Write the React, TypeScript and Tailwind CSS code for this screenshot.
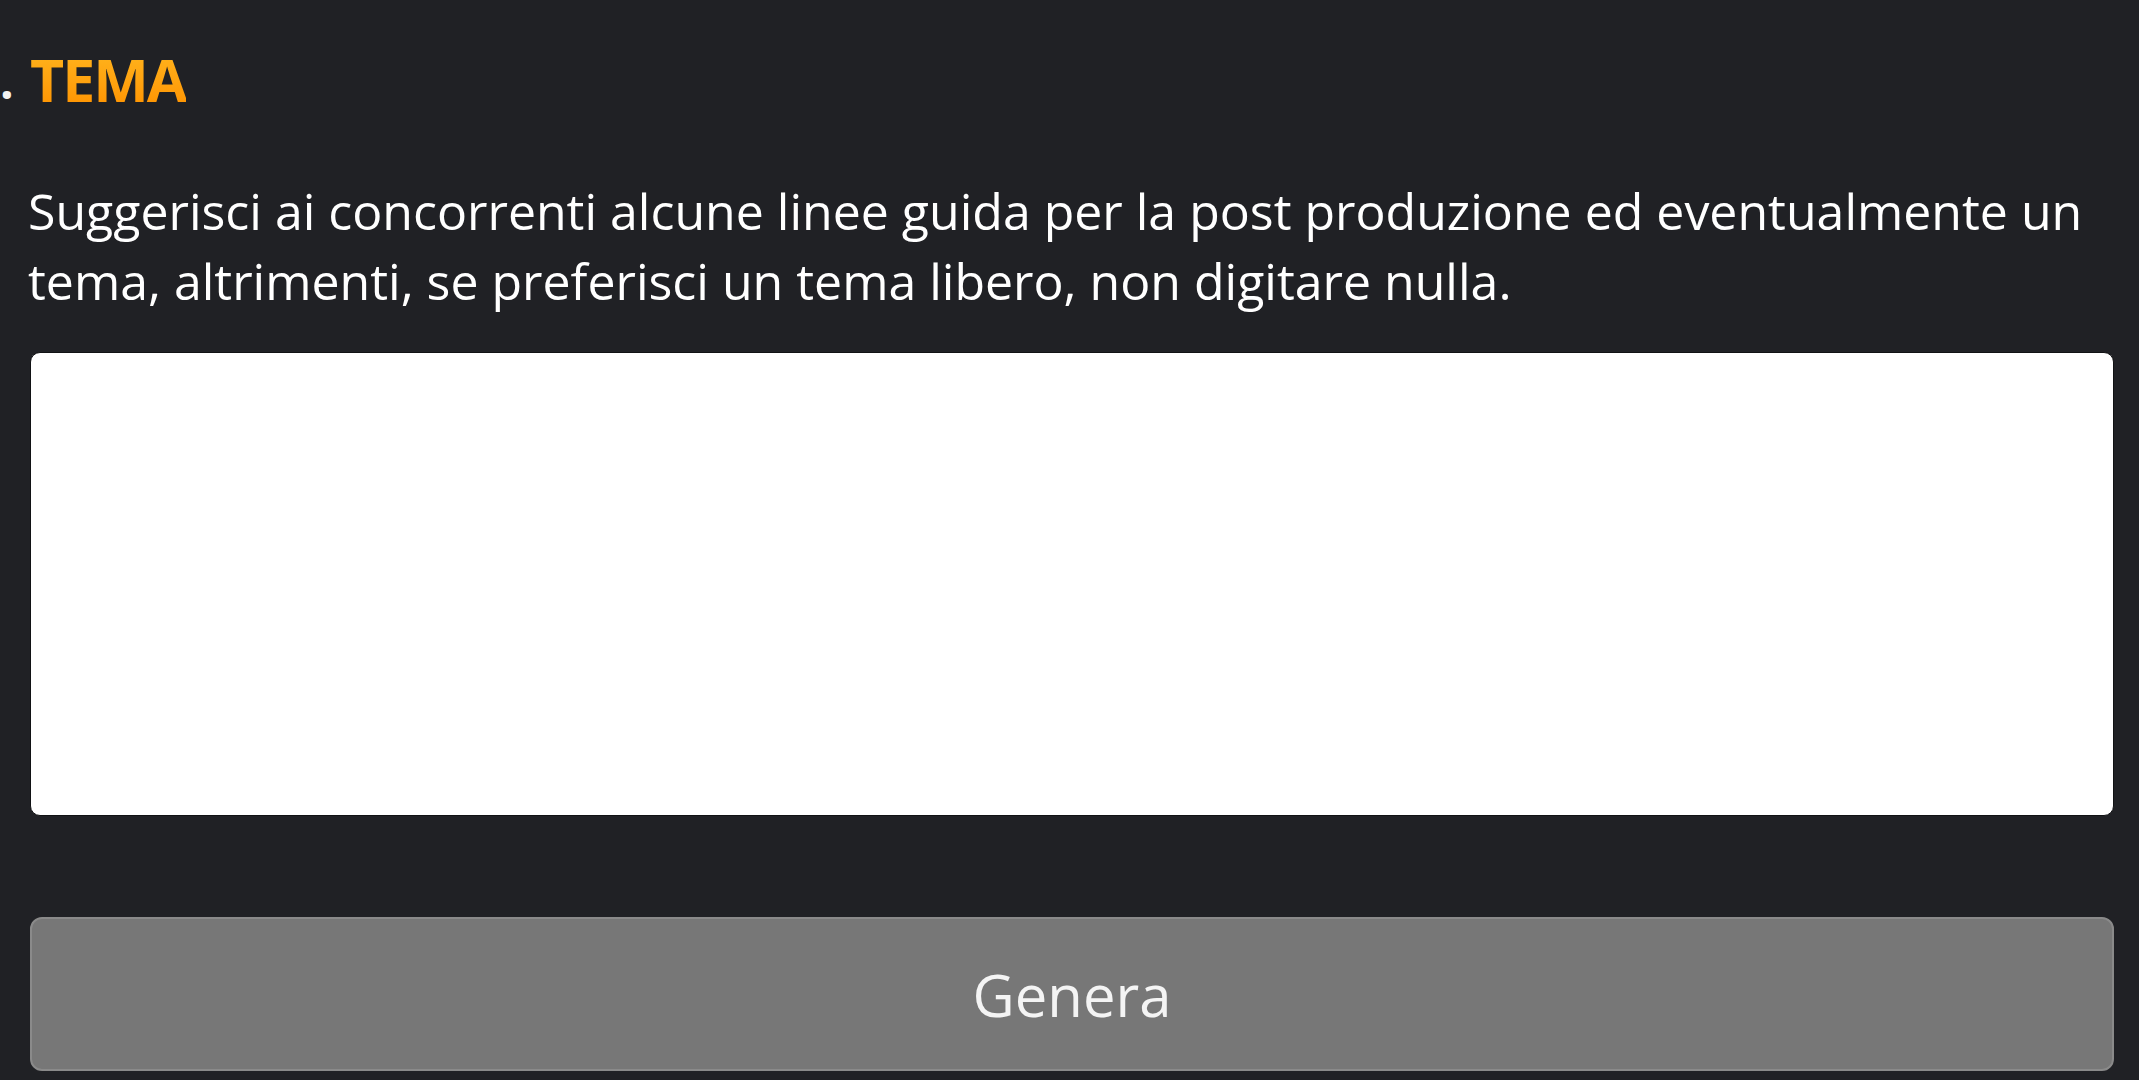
import { useState } from 'react';

const App = () => {
  const [tema, setTema] = useState('');

  return (
    <div className="w-screen h-screen overflow-hidden bg-[#202125] font-['Open_Sans',sans-serif]">
      <div className="relative pl-[30px] pr-[25px] pt-[50px]">
        <span className="absolute left-[0px] top-[50px] text-[48px] leading-[62px] font-bold text-[#f2f2f2]">.</span>
        <h2 className="text-[59px] leading-[59px] font-bold tracking-[-2px] text-transparent bg-clip-text bg-gradient-to-b from-[#ffb41c] to-[#ff9300] w-fit">
          TEMA
        </h2>
        <p className="mt-[67px] -ml-[2px] text-[50px] leading-[70px] text-white">
          Suggerisci ai concorrenti alcune linee guida per la post produzione ed eventualmente un
          tema, altrimenti, se preferisci un tema libero, non digitare nulla.
        </p>
        <textarea
          value={tema}
          onChange={(e) => setTema(e.target.value)}
          className="block w-full h-[464px] mt-[36px] rounded-[10px] bg-white border border-[#111214] resize-none outline-none p-4 text-[40px]"
        />
        <button
          className="block w-full h-[154px] mt-[101px] rounded-[12px] bg-[#777777] border-2 border-[#8a8a8a] text-[#f4f4f4] text-[58px]"
          type="button">
          Genera
        </button>
      </div>
    </div>
  );
};

export default App;
